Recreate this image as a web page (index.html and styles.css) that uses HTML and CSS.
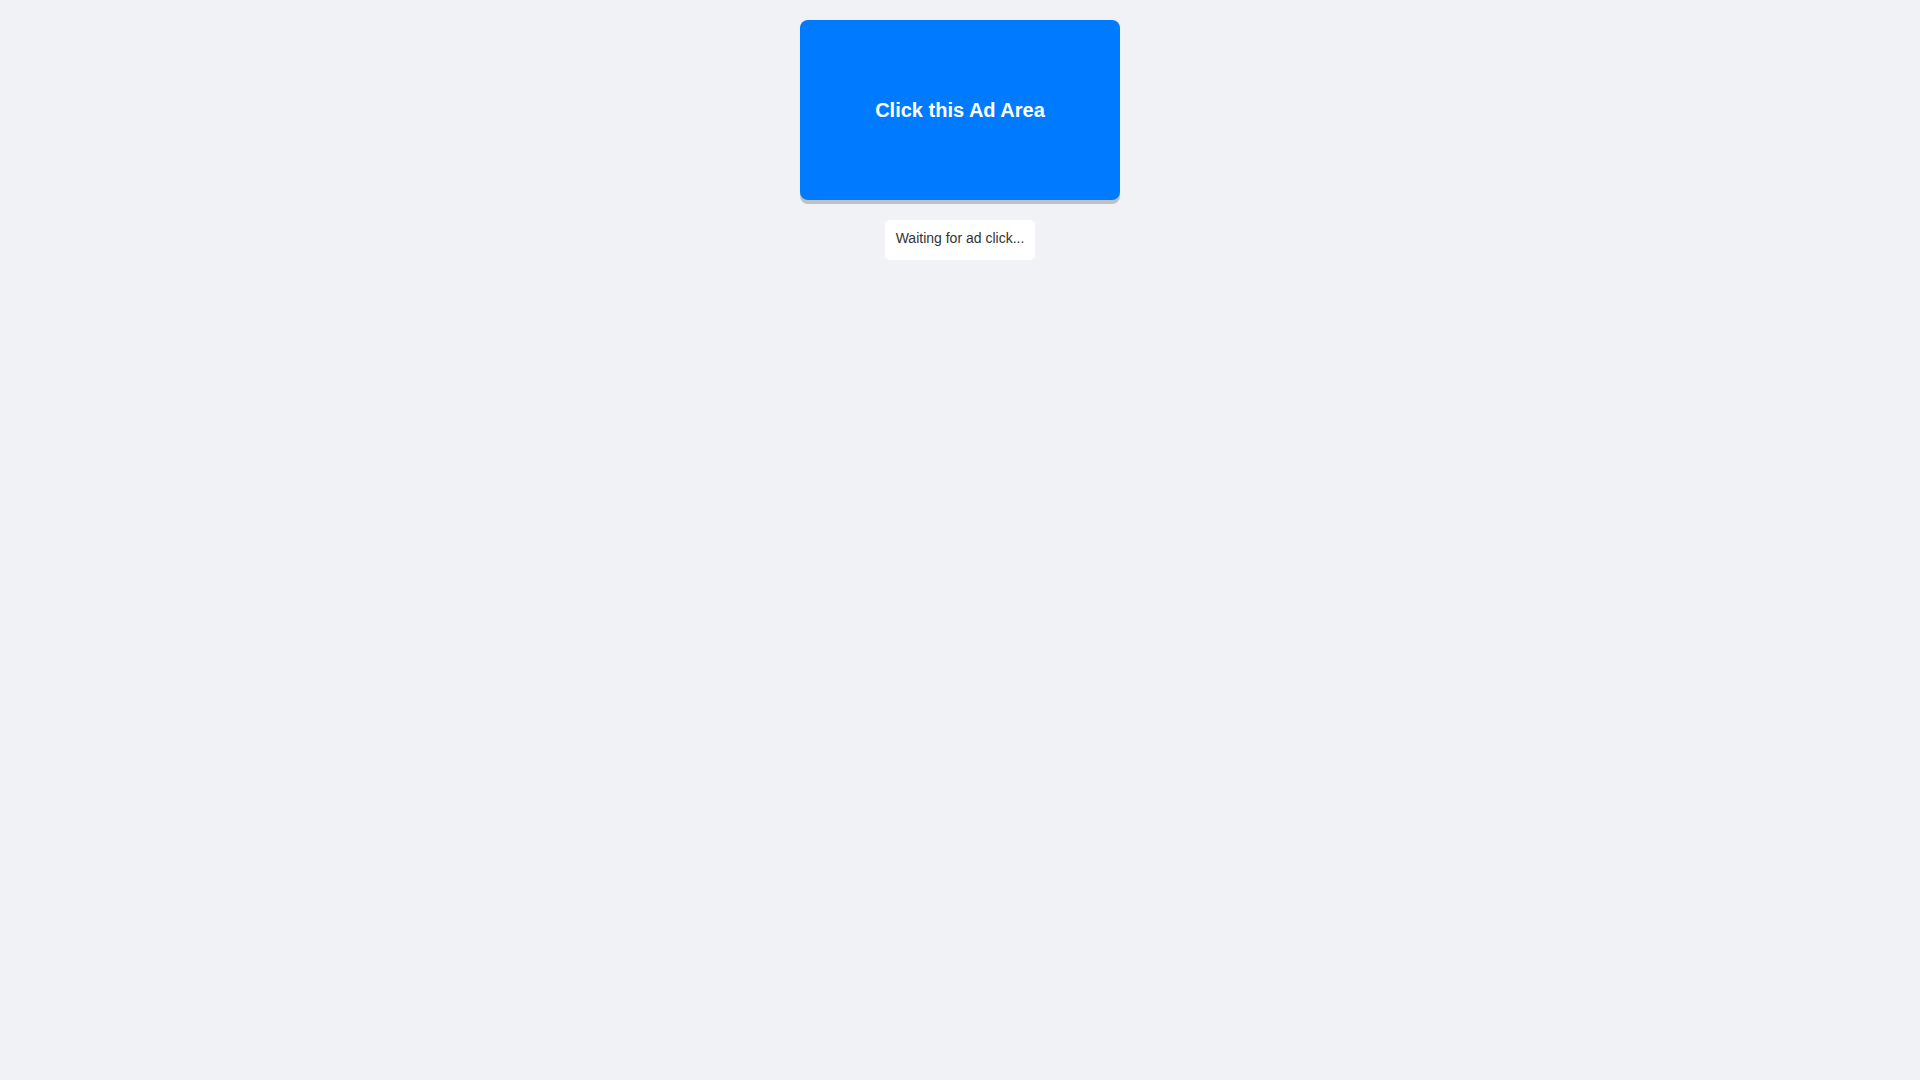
FILE: index.html
```html
<!DOCTYPE html>
<html lang="en">

<head>
    <meta charset="UTF-8">
    <meta name="viewport" content="width=device-width, initial-scale=1.0">
    <title>Ad Click</title>
    <link rel="stylesheet" href="styles.css">
</head>

<body>
    <button type="button" class="ad-area">Click this Ad Area</button>
    <div class="status" role="status">Waiting for ad click...</div>
</body>

</html>
```
FILE: styles.css
```css
body {
    display: flex;
    flex-direction: column;
    align-items: center;
    gap: 20px;
    margin: 0;
    padding: 20px;
    background-color: #f0f2f5;
    font-family: "Liberation Sans", Arial, sans-serif;
}

.ad-area {
    width: 320px;
    height: 180px;
    padding: 0;
    border: 0;
    border-radius: 8px;
    background-color: #007bff;
    box-shadow: 0 4px 0 rgba(0, 0, 0, 0.2);
    color: #fff;
    font-family: inherit;
    font-size: 20px;
    font-weight: bold;
    cursor: pointer;
}

.status {
    box-sizing: border-box;
    min-width: 150px;
    min-height: 40px;
    padding: 10px;
    border-radius: 5px;
    background-color: #fff;
    color: #333;
    font-size: 14px;
    text-align: center;
}
```
